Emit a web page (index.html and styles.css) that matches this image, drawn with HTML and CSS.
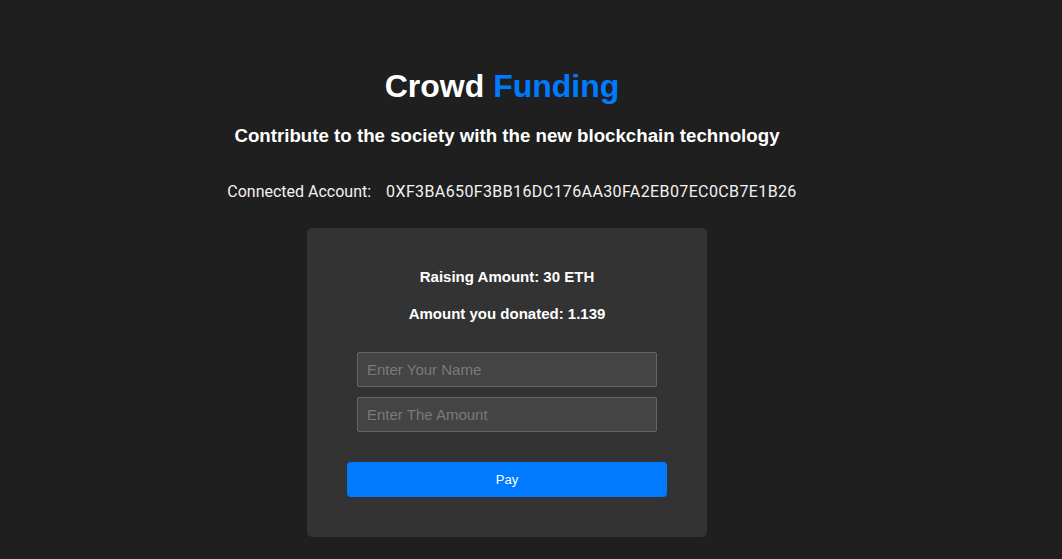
FILE: index.html
```html
<!DOCTYPE html>
<html>
<head>
<meta charset="utf-8">
<link rel="stylesheet" href="styles.css">
</head>
<body>
<main class="page">
  <h1 class="title">Crowd <span class="accent">Funding</span></h1>
  <h2 class="subtitle">Contribute to the society with the new blockchain technology</h2>
  <p class="account"><span class="account-label">Connected Account:</span><span class="account-addr">0XF3BA650F3BB16DC176AA30FA2EB07EC0CB7E1B26</span></p>
  <section class="card">
    <p class="stat">Raising Amount: 30 ETH</p>
    <p class="stat">Amount you donated: 1.139</p>
    <div class="fields">
      <input class="field" type="text" placeholder="Enter Your Name">
      <input class="field" type="text" placeholder="Enter The Amount">
    </div>
    <button class="pay">Pay</button>
  </section>
</main>
</body>
</html>
```

FILE: styles.css
```css
html, body {
  margin: 0;
  padding: 0;
  background: #1f1f1f;
  height: 100%;
}
body {
  font-family: "Liberation Sans", Arial, sans-serif;
  color: #ffffff;
}
.page {
  width: 1014px;
  display: flex;
  flex-direction: column;
  align-items: center;
  padding-top: 68px;
}
.title {
  margin: 0 10px 0 0;
  font-size: 32px;
  font-weight: bold;
  line-height: 37px;
}
.accent {
  color: #007bff;
}
.subtitle {
  margin: 20px 0 0;
  font-size: 18.7px;
  font-weight: bold;
  line-height: 22px;
}
.account {
  margin: 35px 0 0 10px;
  font-family: Roboto, sans-serif;
  font-size: 16px;
  line-height: 19px;
  color: #f2f2f2;
  display: flex;
  gap: 15px;
}
.account-addr {
  letter-spacing: 0.38px;
}
.card {
  margin-top: 27px;
  width: 400px;
  box-sizing: border-box;
  background: #333333;
  border-radius: 5px;
  padding: 40px 40px 40px;
  display: flex;
  flex-direction: column;
  align-items: center;
}
.stat {
  margin: 0 0 20px;
  font-size: 15px;
  font-weight: bold;
  line-height: 17px;
}
.fields {
  margin-top: 10px;
  display: flex;
  flex-direction: column;
  gap: 10px;
}
.field {
  width: 300px;
  height: 35px;
  box-sizing: border-box;
  background: #444444;
  border: 1px solid #666666;
  border-radius: 2px;
  padding: 0 9px;
  font-family: "Liberation Sans", Arial, sans-serif;
  font-size: 15px;
  color: #ddd;
  outline: none;
}
.field::placeholder {
  color: #7a7a7a;
}
.pay {
  margin-top: 30px;
  width: 320px;
  height: 35px;
  border: none;
  border-radius: 4px;
  background: #007bff;
  color: #ffffff;
  font-family: "Liberation Sans", Arial, sans-serif;
  font-size: 13px;
}
```
